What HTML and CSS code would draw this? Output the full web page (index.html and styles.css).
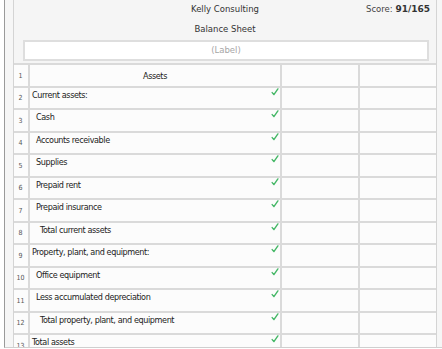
FILE: index.html
```html
<!DOCTYPE html>
<html>
<head>
<meta charset="utf-8">
<link rel="stylesheet" href="styles.css">
</head>
<body>
<div class="screen">
  <div class="panel">
    <header class="head">
      <div class="titlerow">
        <span></span>
        <span class="title">Kelly Consulting</span>
        <span class="score">Score: <b>91/165</b></span>
      </div>
      <div class="title2">Balance Sheet</div>
      <div class="labelbox">(Label)</div>
    </header>
    <div class="sheet">
      <div class="num">1</div><div class="desc center"><span>Assets</span></div><div class="amt"></div><div class="amt"></div>

      <div class="num">2</div><div class="desc l0"><span>Current assets:</span><svg class="ok" viewBox="0 0 8 8"><path d="M1.2 4.6 L2.9 6.6 L6.9 0.9"/></svg></div><div class="amt"></div><div class="amt"></div>

      <div class="num">3</div><div class="desc l1"><span>Cash</span><svg class="ok" viewBox="0 0 8 8"><path d="M1.2 4.6 L2.9 6.6 L6.9 0.9"/></svg></div><div class="amt"></div><div class="amt"></div>

      <div class="num">4</div><div class="desc l1"><span>Accounts receivable</span><svg class="ok" viewBox="0 0 8 8"><path d="M1.2 4.6 L2.9 6.6 L6.9 0.9"/></svg></div><div class="amt"></div><div class="amt"></div>

      <div class="num">5</div><div class="desc l1"><span>Supplies</span><svg class="ok" viewBox="0 0 8 8"><path d="M1.2 4.6 L2.9 6.6 L6.9 0.9"/></svg></div><div class="amt"></div><div class="amt"></div>

      <div class="num">6</div><div class="desc l1"><span>Prepaid rent</span><svg class="ok" viewBox="0 0 8 8"><path d="M1.2 4.6 L2.9 6.6 L6.9 0.9"/></svg></div><div class="amt"></div><div class="amt"></div>

      <div class="num">7</div><div class="desc l1"><span>Prepaid insurance</span><svg class="ok" viewBox="0 0 8 8"><path d="M1.2 4.6 L2.9 6.6 L6.9 0.9"/></svg></div><div class="amt"></div><div class="amt"></div>

      <div class="num">8</div><div class="desc l2"><span>Total current assets</span><svg class="ok" viewBox="0 0 8 8"><path d="M1.2 4.6 L2.9 6.6 L6.9 0.9"/></svg></div><div class="amt"></div><div class="amt"></div>

      <div class="num">9</div><div class="desc l0"><span>Property, plant, and equipment:</span><svg class="ok" viewBox="0 0 8 8"><path d="M1.2 4.6 L2.9 6.6 L6.9 0.9"/></svg></div><div class="amt"></div><div class="amt"></div>

      <div class="num">10</div><div class="desc l1"><span>Office equipment</span><svg class="ok" viewBox="0 0 8 8"><path d="M1.2 4.6 L2.9 6.6 L6.9 0.9"/></svg></div><div class="amt"></div><div class="amt"></div>

      <div class="num">11</div><div class="desc l1"><span>Less accumulated depreciation</span><svg class="ok" viewBox="0 0 8 8"><path d="M1.2 4.6 L2.9 6.6 L6.9 0.9"/></svg></div><div class="amt"></div><div class="amt"></div>

      <div class="num">12</div><div class="desc l2"><span>Total property, plant, and equipment</span><svg class="ok" viewBox="0 0 8 8"><path d="M1.2 4.6 L2.9 6.6 L6.9 0.9"/></svg></div><div class="amt"></div><div class="amt"></div>

      <div class="num">13</div><div class="desc l0"><span>Total assets</span><svg class="ok" viewBox="0 0 8 8"><path d="M1.2 4.6 L2.9 6.6 L6.9 0.9"/></svg></div><div class="amt"></div><div class="amt"></div>
    </div>
  </div>
</div>
</body>
</html>
```

FILE: styles.css
```css
html, body {
  margin: 0;
  padding: 0;
  background: #ffffff;
}

.screen {
  box-sizing: border-box;
  height: 348px;
  margin-left: 4px;
  border-left: 1px solid #9a9a9a;
  border-bottom: 1px solid #cfcfcf;
  padding-left: 8px;
  background: #f6f6f6;
  overflow: hidden;
  display: flex;
}

.panel {
  box-sizing: border-box;
  width: 424px;
  flex: none;
  border-left: 1px solid #d4d4d4;
  border-right: 1px solid #d4d4d4;
  background: #f5f5f5;
}

.head {
  font-family: "DejaVu Sans", Verdana, sans-serif;
  color: #333;
}

.titlerow {
  display: grid;
  grid-template-columns: 1fr auto 1fr;
  align-items: center;
  height: 19px;
}

.title {
  font-size: 8.5px;
  line-height: 19px;
  text-align: center;
}

.score {
  justify-self: end;
  font-size: 8.5px;
  line-height: 19px;
  padding-right: 6px;
  color: #444;
}

.score b {
  color: #333;
  font-size: 9px;
}

.title2 {
  font-size: 8.5px;
  line-height: 20px;
  height: 20px;
  text-align: center;
}

.labelbox {
  box-sizing: border-box;
  height: 21px;
  margin: 1px 7px 2px 9px;
  border: 2px solid #dedede;
  background: #ffffff;
  color: #a6a6a6;
  font-size: 8.5px;
  line-height: 17px;
  text-align: center;
}

.sheet {
  display: grid;
  grid-template-columns: 14px 250px 76px 76px;
  grid-auto-rows: 20.5px;
  gap: 2px;
  padding-top: 2px;
  background: #dadada;
  font-family: "DejaVu Sans Condensed", "DejaVu Sans", sans-serif;
  font-stretch: condensed;
}

.num {
  background: #fcfcfc;
  font-size: 7px;
  color: #555;
  display: flex;
  align-items: center;
  justify-content: center;
  padding-right: 1px;
  padding-top: 1px;
}

.desc {
  background: #fcfcfc;
  display: flex;
  justify-content: space-between;
  align-items: flex-start;
  font-size: 9px;
  letter-spacing: -0.4px;
  color: #222;
  line-height: 12px;
}

.desc span {
  padding-top: 1px;
}

.desc.center {
  justify-content: center;
  align-items: center;
}

.desc.center span {
  padding-top: 2px;
}

.l0 { padding-left: 2px; }
.l1 { padding-left: 6px; }
.l2 { padding-left: 10px; }

.ok {
  width: 8px;
  height: 8px;
  margin-right: 1px;
  flex: none;
}

.ok path {
  fill: none;
  stroke: #44b766;
  stroke-width: 1.4;
  stroke-linecap: round;
  stroke-linejoin: round;
}

.amt {
  background: #fcfcfc;
}
```
